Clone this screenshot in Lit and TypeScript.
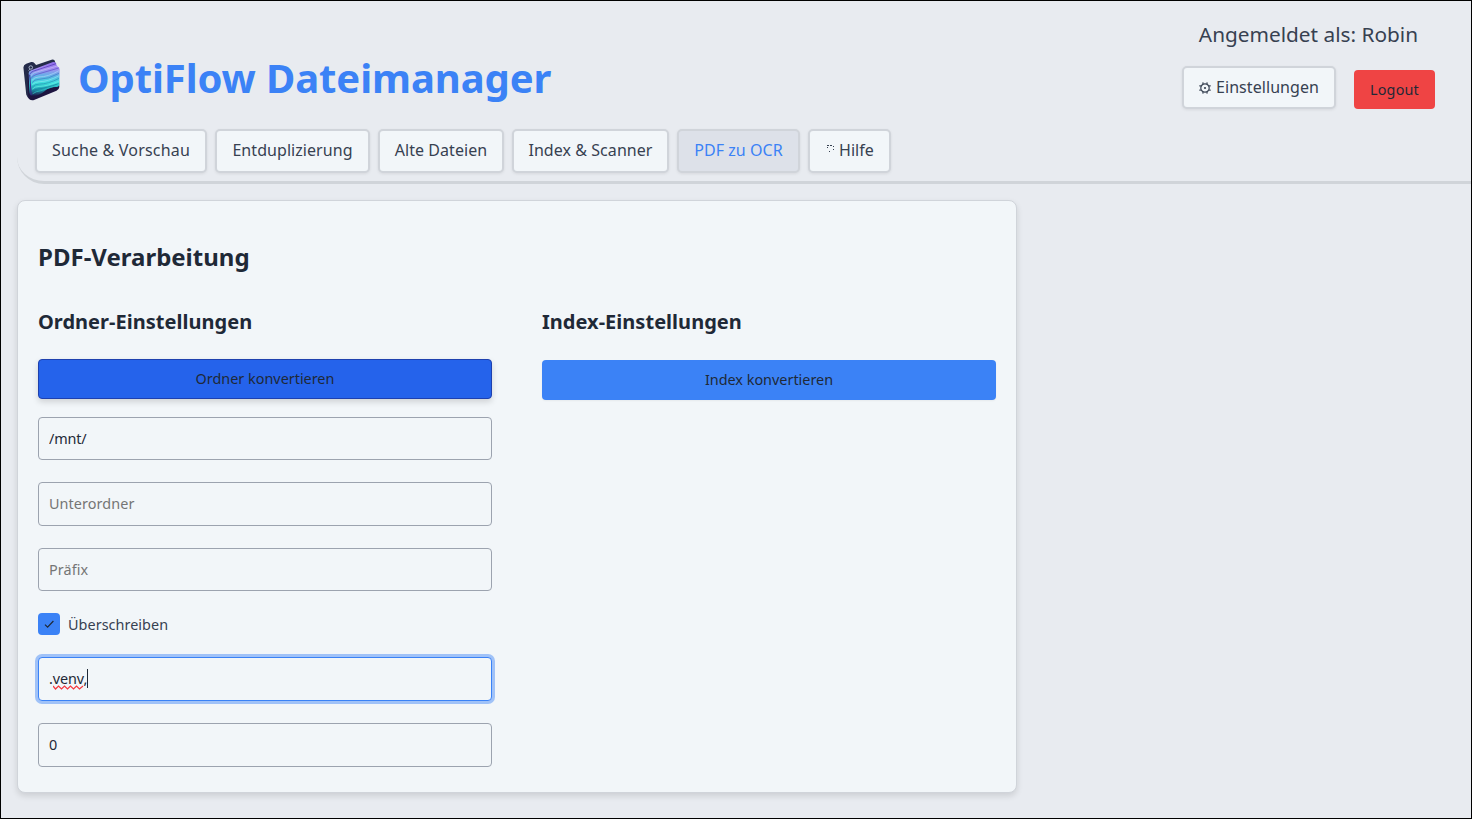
import { LitElement, html, css } from "lit";
import { customElement } from "lit/decorators.js";

const folderLogo = html`
  <svg class="logo" viewBox="24 26 108 127" preserveAspectRatio="none" aria-hidden="true">
    <defs>
      <linearGradient id="sheet" x1="0" y1="0" x2="0" y2="1">
        <stop offset="0" stop-color="#8f6bea" />
        <stop offset="0.2" stop-color="#a58df0" />
        <stop offset="0.42" stop-color="#5fb4e6" />
        <stop offset="0.62" stop-color="#3ce0dc" />
        <stop offset="0.8" stop-color="#1fa0b4" />
        <stop offset="1" stop-color="#1c1748" />
      </linearGradient>
    </defs>
    <path fill="#242b4a" d="M28 54 Q28 46 36 43 L50 38 Q56 37 59 41 L64 47 L108 31 Q117 29 118 37 L120 48 L60 146 Q48 152 40 142 L36 134 Z" />
    <path fill="#1d1440" d="M40 74 L128 56 L130 112 Q130 119 122 123 L60 149 Q48 154 42 144 Z" />
    <path fill="url(#sheet)" d="M43 70 Q43 64 50 62 L112 38 Q120 36 121 44 L124 50 Q131 52 131 60 L130 104 Q129 112 119 112 Q101 112 88 124 Q72 138 56 138 Q46 138 45 128 Z" />
    <g fill="none" stroke-width="2.2" stroke-linecap="round">
      <path stroke="#5638b8" d="M46 74 Q48 68 56 65 L120 43" />
      <path stroke="#c5b5fa" d="M49 79 Q52 72 60 69 L123 50" />
      <path stroke="#6650cc" d="M50 86 Q54 78 64 75 L127 56" />
      <path stroke="#a9d0f7" d="M53 91 Q60 82 72 82 Q98 82 128 64" />
      <path stroke="#437fc6" d="M53 98 Q60 89 72 89 Q98 89 128 72" />
      <path stroke="#82e6ef" d="M54 104 Q61 96 73 96 Q98 96 128 79" />
      <path stroke="#2995b5" d="M54 111 Q61 103 73 103 Q98 103 128 87" />
      <path stroke="#67f0e3" d="M54 117 Q61 110 73 110 Q98 109 128 95" />
      <path stroke="#167f99" d="M54 124 Q61 117 73 117 Q92 115 127 102" />
      <path stroke="#2fc0c4" d="M55 131 Q64 124 76 123 Q92 118 112 111" />
    </g>
    <path fill="none" stroke="#3b2a94" stroke-width="3" d="M46 76 L50 136" />
    <circle cx="49" cy="54" r="5" fill="none" stroke="#b9c6dc" stroke-width="2.5" />
    <path stroke="#b9c6dc" stroke-width="2.5" d="M46 59 L43 63" />
  </svg>
`;

const gearIcon = html`
  <svg class="gear" viewBox="0 0 12 12" aria-hidden="true">
    <circle cx="6" cy="6" r="4.2" fill="none" stroke="currentColor" stroke-width="1.2" />
    <circle cx="6" cy="6" r="1.1" fill="currentColor" />
    <path
      stroke="currentColor"
      stroke-width="1.4"
      d="M4.2 1.8 L3.7 .4 M7.8 1.8 L8.3 .4 M4.2 10.2 L3.7 11.6 M7.8 10.2 L8.3 11.6 M1.8 4.2 L.4 3.7 M1.8 7.8 L.4 8.3 M10.2 4.2 L11.6 3.7 M10.2 7.8 L11.6 8.3"
    />
  </svg>
`;

const dotsIcon = html`
  <svg class="dots" viewBox="0 0 7 7" shape-rendering="crispEdges" aria-hidden="true">
    <path fill="currentColor" d="M0 0h2v1h-2zM3 0h2v1h-2zM0 2h1v1h-1zM6 1h1v1h-1zM6 4h1v1h-1zM2 6h1v1h-1z" />
  </svg>
`;

@customElement("app-root")
class AppRoot extends LitElement {
  static styles = css`
    :host {
      display: block;
      color: #1f2937;
      font: 14.4px/20px "Noto Sans", sans-serif;
    }
    * { box-sizing: border-box; }
    .page {
      height: 819px;
      padding-left: 16px;
      border: 1px solid #000;
      background: #e8ebf0;
      overflow: hidden;
    }
    .header {
      height: 183px;
      border-bottom: 3px solid #d0d4d9;
      border-bottom-left-radius: 27px;
    }
    .top {
      display: flex;
      justify-content: space-between;
      height: 128px;
    }
    .brand {
      display: flex;
      align-items: center;
      height: 54px;
      margin-top: 50px;
      padding-left: 5px;
    }
    .logo { width: 38px; height: 43px; margin-top: 3px; }
    h1, h2, h3 { margin: 0; font-weight: 700; white-space: nowrap; }
    h1 {
      margin-left: 18px;
      color: #3b82f6;
      font-size: 40px;
      line-height: 54px;
      letter-spacing: -0.1px;
    }
    .user {
      width: 253px;
      margin-right: 36px;
      padding-top: 19px;
    }
    .who {
      margin: 0 17px 0 0;
      color: #374151;
      font-size: 20.8px;
      line-height: 28px;
      text-align: right;
      white-space: nowrap;
    }
    .actions {
      display: flex;
      justify-content: space-between;
      align-items: flex-end;
      height: 43px;
      margin-top: 18px;
    }
    button {
      margin: 0;
      padding: 0;
      border: 0;
      border-radius: 4px;
      color: inherit;
      font: inherit;
      white-space: nowrap;
    }
    .tab, .settings {
      display: flex;
      align-items: center;
      justify-content: center;
      border: 2px solid #d0d4da;
      border-radius: 5px;
      background: #f2f6f9;
      box-shadow: 0 1px 3px rgba(0, 0, 0, 0.08);
      color: #374151;
      font-size: 16px;
      line-height: 22px;
      letter-spacing: 0.06px;
    }
    .settings { width: 154px; height: 43px; padding-bottom: 1px; }
    .gear { width: 12px; height: 12px; margin: 2px 5px 0 0; }
    .logout {
      width: 81px;
      height: 39px;
      background: #ef4444;
      letter-spacing: 0.18px;
    }
    .nav {
      display: grid;
      grid-template-columns: 172px 155px 126px 157px 123px 83px;
      gap: 8px;
      margin-left: 18px;
    }
    .tab { height: 44px; padding-bottom: 2px; }
    .tab.wide { letter-spacing: 0.19px; }
    .tab.active { background: #dde1e9; color: #3b82f6; }
    .tab.help { padding-left: 2px; }
    .dots { width: 7px; height: 7px; margin: 0 5px 3px 0; }
    .card {
      display: grid;
      grid-template-columns: 454px 454px;
      column-gap: 50px;
      align-content: start;
      width: 1000px;
      height: 593px;
      margin-top: 16px;
      padding: 39px 20px 0;
      border: 1px solid #d0d4da;
      border-radius: 8px;
      background: #f2f6f9;
      box-shadow: 0 3px 6px rgba(0, 0, 0, 0.12);
    }
    h2 { grid-column: 1 / -1; font-size: 24px; line-height: 34px; }
    h3 { margin-top: 34px; font-size: 20px; line-height: 28px; letter-spacing: 0.03px; }
    .run {
      display: block;
      width: 100%;
      height: 40px;
      margin-top: 24px;
      background: #3b82f6;
      box-shadow: 0 1px 2px rgba(0, 0, 0, 0.05);
    }
    .run.hover {
      margin-top: 23px;
      border: 1px solid #1e40af;
      background: #2563eb;
      box-shadow: 0 3px 6px rgba(0, 0, 0, 0.15);
    }
    .field {
      display: block;
      width: 100%;
      height: 44px;
      margin: 22px 0 0;
      padding: 0 10px 2px;
      border: 1px solid #9ca3af;
      border-radius: 4px;
      background: #f2f6f9;
      color: inherit;
      font: inherit;
      outline: none;
    }
    .field.low { height: 43px; padding-bottom: 0; }
    .field.first { margin-top: 18px; letter-spacing: -0.15px; }
    .field::placeholder { color: #757575; opacity: 1; letter-spacing: 0.08px; }
    .field.focus {
      display: flex;
      align-items: center;
      padding-bottom: 0;
      border-color: #3b82f6;
      box-shadow: 0 0 0 3px rgba(59, 130, 246, 0.45);
      letter-spacing: -0.1px;
    }
    .typed { position: relative; }
    .wave {
      position: absolute;
      left: 4px;
      top: 16px;
      width: 31px;
      height: 5px;
    }
    .caret { width: 1px; height: 19px; margin-bottom: 1px; background: #1f2937; }
    .check {
      display: flex;
      align-items: center;
      gap: 8px;
      height: 22px;
      margin-top: 22px;
      color: #374151;
      letter-spacing: 0.05px;
    }
    .check-text { padding-top: 2px; }
    .box { width: 22px; height: 22px; border-radius: 4px; background: #3b82f6; }
  `;

  private tabs = [
    { label: "Suche & Vorschau", style: "wide" },
    { label: "Entduplizierung", style: "" },
    { label: "Alte Dateien", style: "" },
    { label: "Index & Scanner", style: "" },
    { label: "PDF zu OCR", style: "active" },
    { label: "Hilfe", style: "help", icon: dotsIcon },
  ];

  render() {
    return html`
      <div class="page">
        <header class="header">
          <div class="top">
            <div class="brand">${folderLogo}<h1>OptiFlow Dateimanager</h1></div>
            <div class="user">
              <p class="who">Angemeldet als: Robin</p>
              <div class="actions">
                <button class="settings">${gearIcon}Einstellungen</button>
                <button class="logout">Logout</button>
              </div>
            </div>
          </div>
          <nav class="nav">
            ${this.tabs.map((t) => html`<button class="tab ${t.style}">${t.icon ?? ""}${t.label}</button>`)}
          </nav>
        </header>
        <main class="card">
          <h2>PDF-Verarbeitung</h2>
          <section>
            <h3>Ordner-Einstellungen</h3>
            <button class="run hover">Ordner konvertieren</button>
            <input class="field low first" .value=${"/mnt/"} />
            <input class="field" placeholder="Unterordner" />
            <input class="field low" placeholder="Präfix" />
            <label class="check">
              <svg class="box" viewBox="0 0 22 22">
                <path d="M7 11.6 L9.6 14.2 L15.4 8" fill="none" stroke="#1f2937" stroke-width="1.2" />
              </svg>
              <span class="check-text">Überschreiben</span>
            </label>
            <div class="field focus">
              <span class="typed">.venv,<svg class="wave" viewBox="0 0 31 5">
                <path d="M0 1 L2.5 4 L5.5 1 L8.5 4 L11.5 1 L14.5 4 L17.5 1 L20.5 4 L23.5 1 L26.5 4 L30 1" fill="none" stroke="#f5383f" stroke-width="1.2" />
              </svg></span><span class="caret"></span>
            </div>
            <input class="field" .value=${"0"} />
          </section>
          <section>
            <h3>Index-Einstellungen</h3>
            <button class="run">Index konvertieren</button>
          </section>
        </main>
      </div>
    `;
  }
}
